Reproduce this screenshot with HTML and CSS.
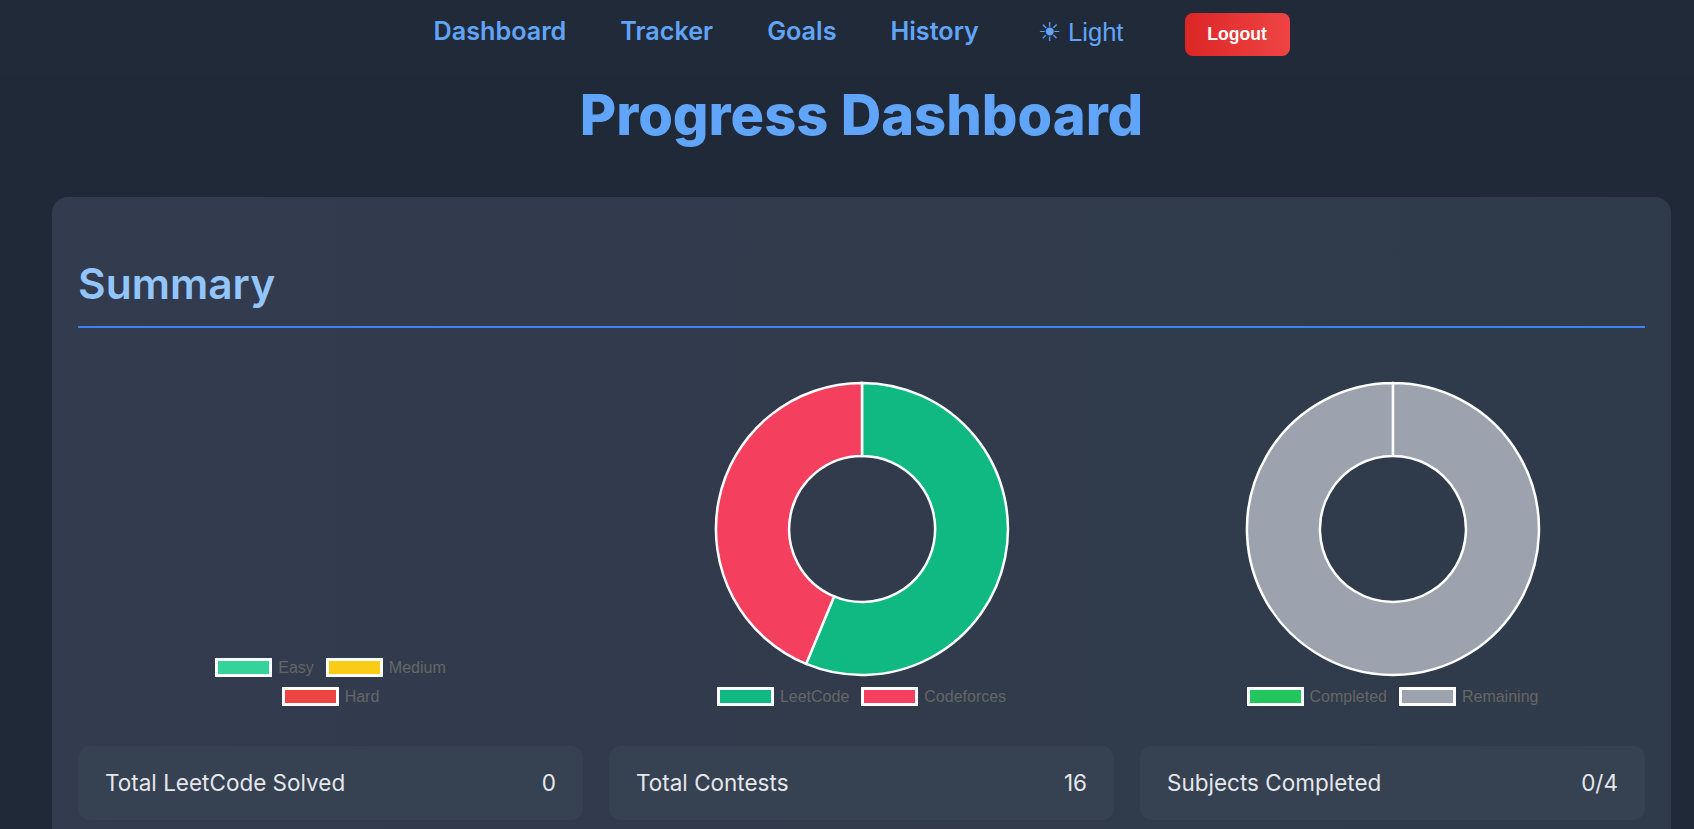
FILE: index.html
```html
<!DOCTYPE html>
<html>
  <head>
    <meta charset="utf-8">
    <title>Progress Dashboard</title>
    <link rel="stylesheet" href="styles.css">
  </head>
  <body>
    <nav class="topbar">
      <a class="nav-link" href="#">Dashboard</a>
      <a class="nav-link" href="#">Tracker</a>
      <a class="nav-link" href="#">Goals</a>
      <a class="nav-link" href="#">History</a>
      <button class="theme-toggle">☀ Light</button>
      <button class="logout">Logout</button>
    </nav>
    <main class="page">
      <h1 class="page-title">Progress Dashboard</h1>
      <section class="panel">
        <h2 class="panel-title">Summary</h2>
        <div class="charts">
          <div class="chart">
            <div class="donut-box"></div>
            <div class="legend legend-wrap">
              <span class="legend-item"><i class="swatch swatch-easy"></i>Easy</span>
              <span class="legend-item"><i class="swatch swatch-medium"></i>Medium</span>
              <span class="legend-item"><i class="swatch swatch-hard"></i>Hard</span>
            </div>
          </div>
          <div class="chart">
            <div class="donut-box">
              <svg class="donut" viewBox="0 0 296 296">
                <path d="M148 2 A146 146 0 1 1 92.1 282.9 L120.1 215.4 A73 73 0 1 0 148 75 Z" fill="#10b981" stroke="#fff" stroke-width="2.5"/>
                <path d="M92.1 282.9 A146 146 0 0 1 148 2 L148 75 A73 73 0 0 0 120.1 215.4 Z" fill="#f43f5e" stroke="#fff" stroke-width="2.5"/>
              </svg>
            </div>
            <div class="legend">
              <span class="legend-item"><i class="swatch swatch-leetcode"></i>LeetCode</span>
              <span class="legend-item"><i class="swatch swatch-codeforces"></i>Codeforces</span>
            </div>
          </div>
          <div class="chart">
            <div class="donut-box">
              <svg class="donut" viewBox="0 0 296 296">
                <path d="M148 2 A146 146 0 1 1 147.9 2 L147.9 75 A73 73 0 1 0 148 75 Z" fill="#9ca3af" stroke="#fff" stroke-width="2.5"/>
              </svg>
            </div>
            <div class="legend">
              <span class="legend-item"><i class="swatch swatch-completed"></i>Completed</span>
              <span class="legend-item"><i class="swatch swatch-remaining"></i>Remaining</span>
            </div>
          </div>
        </div>
        <div class="stats">
          <div class="stat"><span>Total LeetCode Solved</span><span>0</span></div>
          <div class="stat"><span>Total Contests</span><span>16</span></div>
          <div class="stat"><span>Subjects Completed</span><span>0/4</span></div>
        </div>
      </section>
    </main>
  </body>
</html>
```

FILE: styles.css
```css
* {
  box-sizing: border-box;
}

html, body {
  margin: 0;
  height: 829px;
  overflow: hidden;
}

body {
  background: #1f2937;
  font-family: Inter, "Open Sans", sans-serif;
}

.topbar {
  height: 75px;
  padding-left: 29px;
  display: flex;
  justify-content: center;
  align-items: flex-start;
  background: #202a38;
}

.nav-link {
  margin-top: 16px;
  margin-right: 54px;
  color: #60a5fa;
  font-size: 25.2px;
  font-weight: 600;
  line-height: 30px;
  text-decoration: none;
}

.theme-toggle {
  margin: 17px 61px 0 5px;
  padding: 0;
  border: 0;
  background: none;
  color: #60a5fa;
  font-family: "Liberation Sans", sans-serif;
  font-size: 25.6px;
  line-height: 30px;
}

.logout {
  width: 105px;
  height: 43px;
  margin-top: 13px;
  border: 0;
  border-radius: 8px;
  background: linear-gradient(90deg, #dc2626, #ef4444);
  color: #fff;
  font-family: "Liberation Sans", sans-serif;
  font-size: 17.6px;
  font-weight: 700;
}

.page {
  padding: 0 23px 0 52px;
}

.page-title {
  margin: 4px 0 0;
  height: 118px;
  color: #60a5fa;
  font-size: 56px;
  font-weight: 800;
  line-height: 72px;
  text-align: center;
}

.panel {
  height: 660px;
  padding: 58px 26px 0;
  border-radius: 16px;
  background: linear-gradient(90deg, #333b4e, #2f3b4a);
}

.panel-title {
  margin: 0;
  padding-bottom: 13px;
  border-bottom: 2px solid #3b82f6;
  color: #93c5fd;
  font-size: 42.5px;
  font-weight: 600;
  line-height: 58px;
}

.charts {
  display: grid;
  grid-template-columns: repeat(3, 1fr);
  gap: 26px;
  margin-top: 53px;
}

.chart {
  display: flex;
  flex-direction: column;
  align-items: center;
}

.donut-box {
  height: 296px;
}

.donut {
  display: block;
  width: 296px;
  height: 296px;
}

.legend {
  min-height: 29px;
  display: flex;
  justify-content: center;
  align-items: flex-end;
  gap: 10px 12px;
  color: #666;
  font-family: "Liberation Sans", sans-serif;
  font-size: 16px;
  line-height: 19px;
}

.legend-wrap {
  width: 290px;
  margin-top: -19px;
  flex-wrap: wrap;
}

.legend-item {
  display: flex;
  align-items: center;
}

.swatch {
  width: 57px;
  height: 19px;
  margin-right: 6px;
  border: 3px solid #fff;
}

.swatch-easy { background: #34d399; }
.swatch-medium { background: #facc15; }
.swatch-hard { background: #ef4444; }
.swatch-leetcode { background: #10b981; }
.swatch-codeforces { background: #f43f5e; }
.swatch-completed { background: #22c55e; }
.swatch-remaining { background: #9ca3af; }

.stats {
  display: grid;
  grid-template-columns: repeat(3, 1fr);
  gap: 26px;
  margin-top: 40px;
}

.stat {
  height: 74px;
  padding: 0 27px 2px;
  display: flex;
  justify-content: space-between;
  align-items: center;
  border-radius: 12px;
  background: #364152;
  color: #e5e7eb;
  font-size: 22.5px;
}
```
